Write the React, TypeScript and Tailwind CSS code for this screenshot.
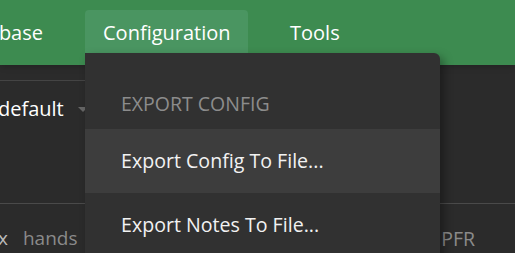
const font = { fontFamily: '"Open Sans", "Noto Sans", sans-serif' };

export default function App() {
  return (
    <div className="relative w-[515px] h-[253px] overflow-hidden bg-[#2b2b2b] text-white" style={font}>
      {/* Top bar */}
      <header className="h-[65px] bg-[#3d8b50] flex items-center gap-[24px] shadow-md">
        <div className="w-[61px] flex justify-end shrink-0">
          <span className="whitespace-nowrap pr-[18px] text-[20px]">Database</span>
        </div>
        <button className="px-[18px] h-[46px] w-[163px] rounded-[4px] bg-[#4a9561] text-[20px] text-left text-white">
          Configuration
        </button>
        <button className="px-[18px] h-[46px] text-[20px] text-white">Tools</button>
      </header>

      {/* Page content behind the menu */}
      <div className="flex flex-col">
        <div className="mt-[15px] w-[200px] border-t border-[#444]" />
        <div className="h-[56px] flex items-center -ml-[2px]">
          <span className="text-[20px]">default</span>
          <span className="ml-[14px] w-0 h-0 border-l-[5px] border-r-[5px] border-t-[5px] border-l-transparent border-r-transparent border-t-[#666]" />
        </div>
        <div className="h-[66px]" />
        <div className="border-t border-[#4a4a4a]" />
        <div className="h-[69px] flex items-center text-[19px]">
          <span className="-ml-[2px] text-[#bbb]">x</span>
          <span className="ml-[15px] text-[#8a8a8a]">hands</span>
          <span className="ml-auto mr-[40px] text-[19.5px] text-[#8a8a8a]">PFR</span>
        </div>
      </div>

      {/* Dropdown menu */}
      <div className="absolute left-[85px] top-[53px] w-[355px] h-[220px] bg-[#313131] rounded-tr-[6px] shadow-[4px_4px_10px_rgba(0,0,0,0.35)] pt-[12px]">
        <div className="h-[64px] pt-[14px] flex items-center px-[36px] text-[19.5px] text-[#8c8c8c]">
          EXPORT CONFIG
        </div>
        <div className="h-[64px] flex items-center px-[36px] bg-[#3d3d3d] text-[19.6px] text-[#f2f2f2]">
          Export Config To File...
        </div>
        <div className="h-[64px] flex items-center px-[36px] text-[19.6px] text-[#f2f2f2]">
          Export Notes To File...
        </div>
      </div>
    </div>
  );
}
